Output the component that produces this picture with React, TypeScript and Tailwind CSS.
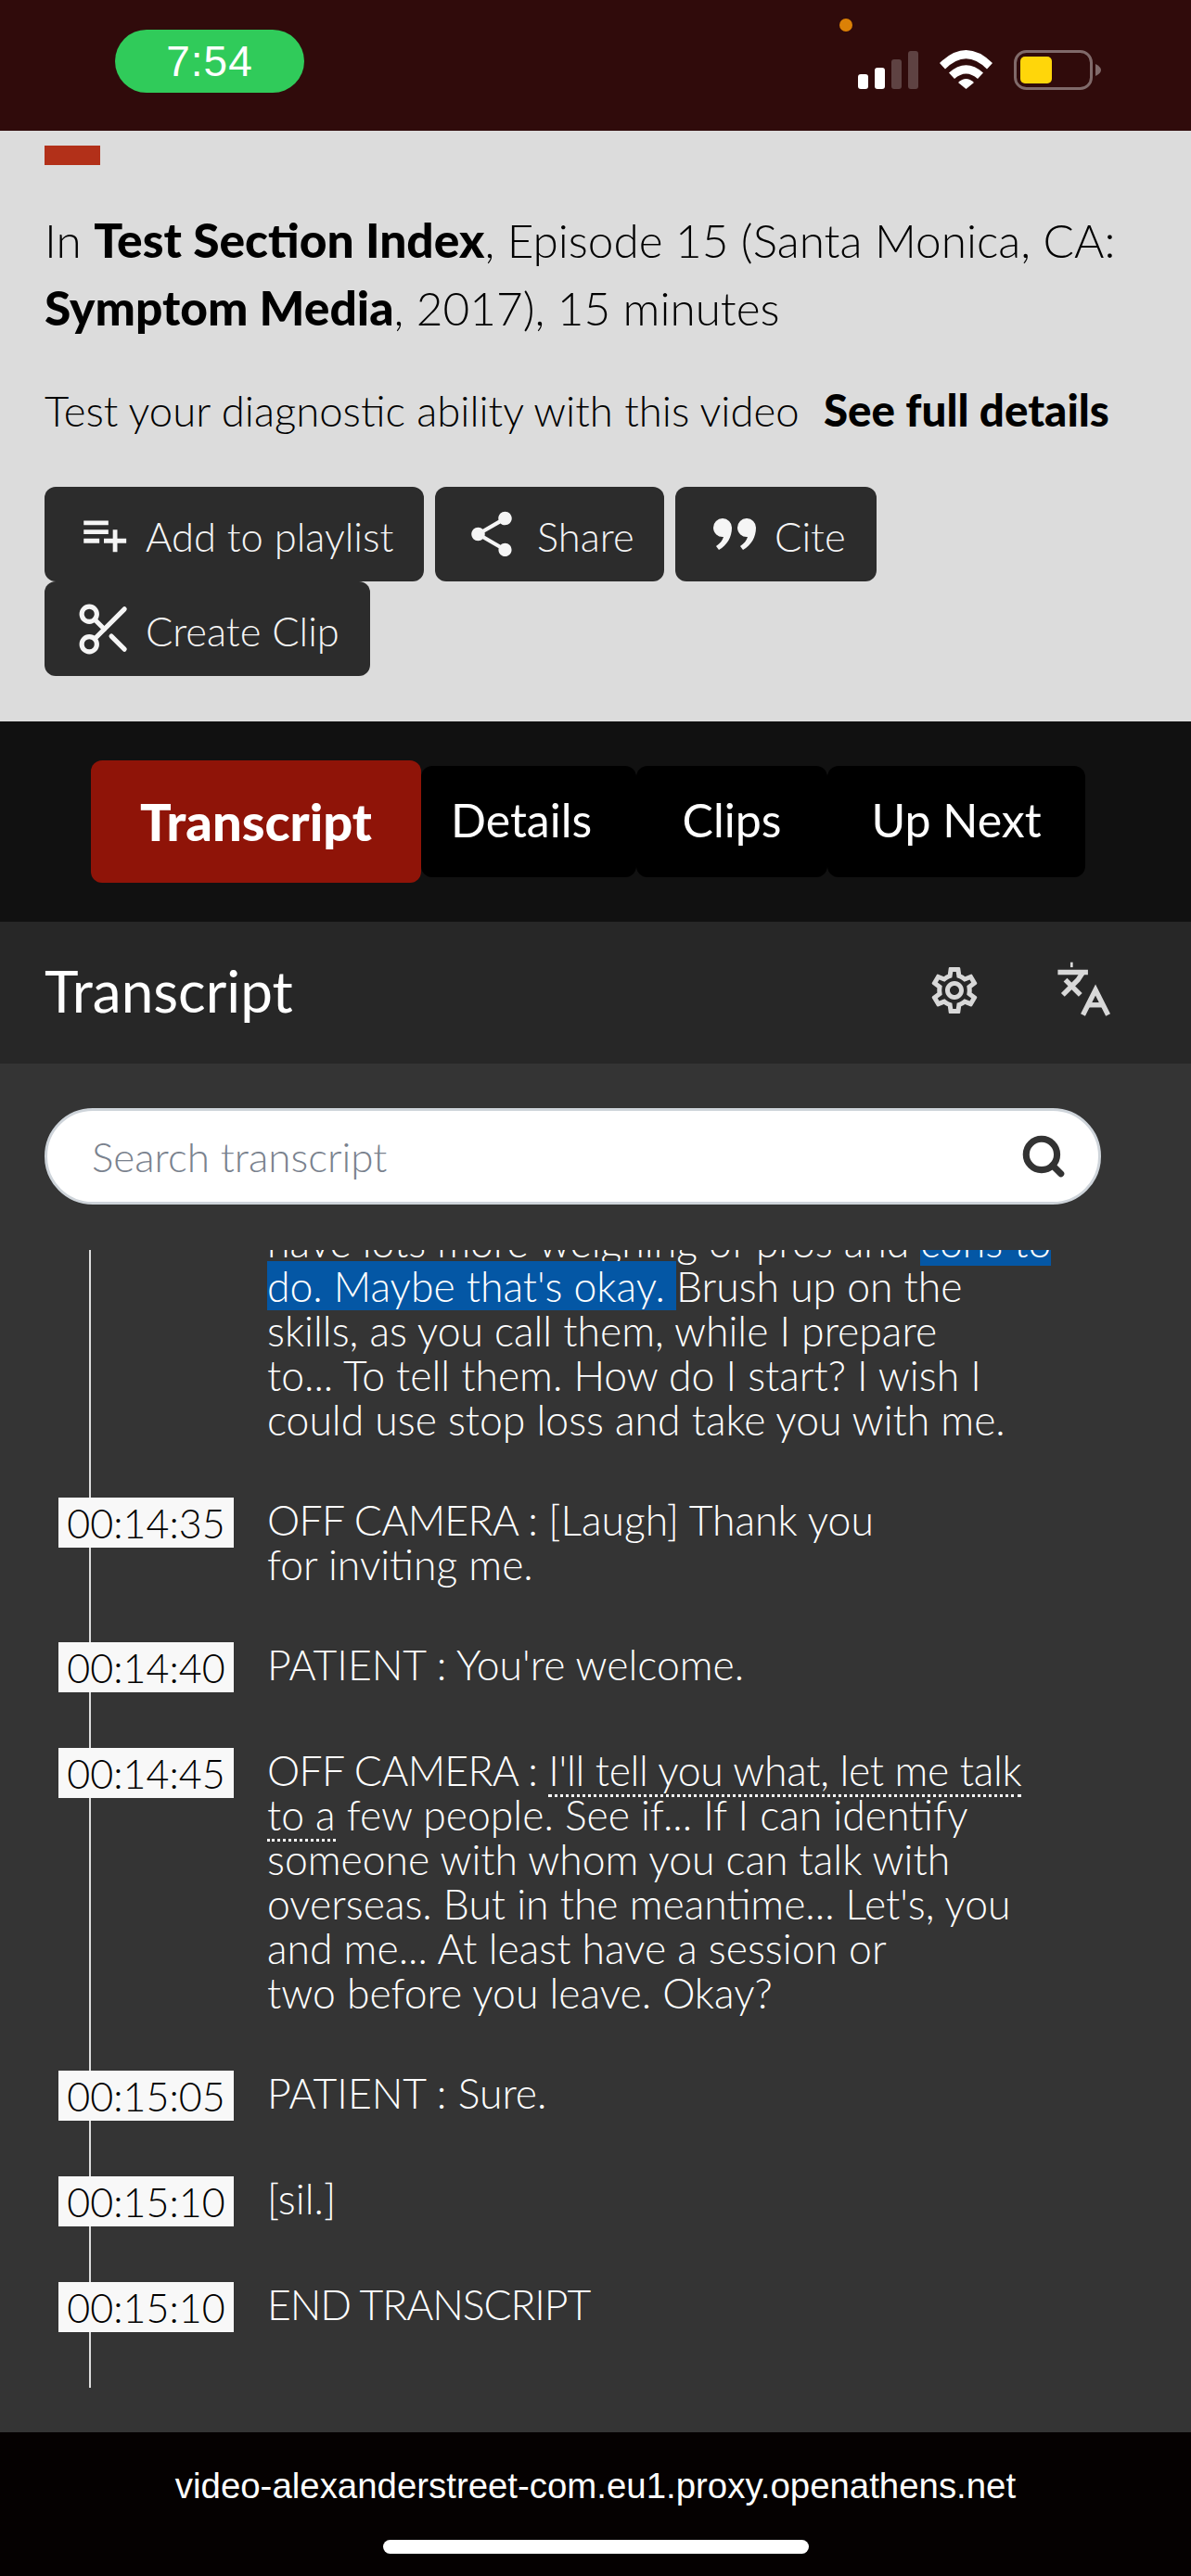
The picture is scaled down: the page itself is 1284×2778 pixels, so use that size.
import React from 'react';
import { MdOutlineSettings, MdPlaylistAdd, MdShare } from 'react-icons/md';
import { Languages, Scissors, Search } from 'lucide-react';

const FONT = "font-['Lato','Noto_Sans',sans-serif]";

const StatusIcons = () => (
  <svg width="282" height="78" viewBox="905 20 282 78" className="block">
    <circle cx="912" cy="27" r="7" fill="#db8106" />
    <rect x="925" y="80" width="11" height="16" rx="3" fill="#fff" />
    <rect x="943" y="73" width="11" height="23" rx="3" fill="#fff" />
    <rect x="961" y="64" width="11" height="32" rx="3" fill="#5e4242" />
    <rect x="979" y="55" width="11" height="41" rx="3" fill="#5e4242" />
    <path d="M1013 68 Q1041.500 40 1070 68 L1064 74.500 Q1041.500 52 1019 74.500 Z" fill="#fff" />
    <path d="M1023 78.500 Q1041.500 62 1060 78.500 L1054 85 Q1041.500 74 1029 85 Z" fill="#fff" />
    <path d="M1033 89 Q1041.500 81 1050 89 L1041.500 96 Z" fill="#fff" />
    <rect x="1094.500" y="55.500" width="82" height="40" rx="12" fill="none" stroke="#806a6a" strokeWidth="3" />
    <rect x="1100" y="61" width="34" height="29" rx="5" fill="#ffd60a" />
    <path d="M1181 69 Q1187 72 1187 75.500 Q1187 79 1181 82 Z" fill="#806a6a" />
  </svg>
);

const QuoteIcon = () => (
  <svg width="46" height="34" viewBox="0 0 46 34" fill="#f5f5f5" className="shrink-0">
    <path d="M0 10 a10 10 0 1 1 20 0 c0 10 -5 19 -14 24 l-3 -4 c4 -3 7 -6 8 -10 a10 10 0 0 1 -11 -10 Z" />
    <path d="M26 10 a10 10 0 1 1 20 0 c0 10 -5 19 -14 24 l-3 -4 c4 -3 7 -6 8 -10 a10 10 0 0 1 -11 -10 Z" />
  </svg>
);

const ACTION = 'flex items-center h-[102px] rounded-xl bg-[#2c2c2c] text-[#f5f5f5] text-[43.500px] font-light leading-none';
const CAPS = 'tracking-[-0.7px]';
const DOTTED = 'border-b-[3px] border-dotted border-white';

type Row = { time: string | null; lines: React.ReactNode[] };

const ROWS: Row[] = [
  {
    time: null,
    lines: [
      <>have lots more weighing of pros and <span className="bg-[#0457a5]">cons to</span></>,
      <><span className="bg-[#0457a5]">do. Maybe that's okay. </span>Brush up on the</>,
      'skills, as you call them, while I prepare',
      'to... To tell them. How do I start? I wish I',
      'could use stop loss and take you with me.',
    ],
  },
  { time: '00:14:35', lines: [<><span className={CAPS}>OFF CAMERA :</span> [Laugh] Thank you</>, 'for inviting me.'] },
  { time: '00:14:40', lines: ["PATIENT : You're welcome."] },
  {
    time: '00:14:45',
    lines: [
      <><span className={CAPS}>OFF CAMERA :</span> <span className={`${DOTTED} tracking-[-0.3px]`}>I'll tell you what, let me talk</span></>,
      <><span className={DOTTED}>to a</span> few people. See if... If I can identify</>,
      'someone with whom you can talk with',
      "overseas. But in the meantime... Let's, you",
      'and me... At least have a session or',
      'two before you leave. Okay?',
    ],
  },
  { time: '00:15:05', lines: ['PATIENT : Sure.'] },
  { time: '00:15:10', lines: ['[sil.]'] },
  { time: '00:15:10', lines: [<span className="tracking-[-1.100px]">END TRANSCRIPT</span>] },
];

const App: React.FC = () => {
  return (
    <div className={`w-[1284px] h-[2778px] overflow-hidden flex flex-col ${FONT}`}>
      {/* status bar */}
      <div className="h-[141px] shrink-0 bg-[#300b0b] flex items-start pl-[124px] pr-[97px]">
        <div className="mt-[32px] w-[204px] h-[68px] rounded-full bg-[#30cb5a] flex items-center justify-center text-white text-[46px] tracking-[1px] font-['Liberation_Sans',sans-serif]">
          7:54
        </div>
        <div className="ml-auto mt-[20px]">
          <StatusIcons />
        </div>
      </div>

      {/* citation */}
      <div className="h-[637px] shrink-0 bg-[#dcdcdc] text-black px-[48px] pt-[16px]">
        <div className="w-[60px] h-[21px] bg-[#b23019]" />
        <div className="mt-[44px] text-[49.500px] leading-[72px] font-light whitespace-nowrap">
          <div>In <b className="text-[51.500px] font-black">Test Section Index</b>, Episode 15 (Santa Monica, CA:</div>
          <div><b className="text-[51.500px] font-black">Symptom Media</b>, 2017), 15 minutes</div>
        </div>
        <div className="mt-[46px] text-[45.500px] leading-[56px] font-light whitespace-nowrap">
          Test your diagnostic ability with this video <b className="ml-[14px] text-[47.500px] font-black">See full details</b>
        </div>
        <div className="mt-[54px] flex flex-wrap gap-x-[12px]">
          <button className={`${ACTION} w-[409px] pl-[35px]`}>
            <MdPlaylistAdd size={58} className="shrink-0" />
            <span className="ml-[16px] mt-[6px]">Add to playlist</span>
          </button>
          <button className={`${ACTION} w-[247px] pl-[32px]`}>
            <MdShare size={58} className="shrink-0" />
            <span className="ml-[20px] mt-[6px]">Share</span>
          </button>
          <button className={`${ACTION} w-[217px] pl-[41px]`}>
            <QuoteIcon />
            <span className="ml-[20px] mt-[6px]">Cite</span>
          </button>
          <button className={`${ACTION} w-[351px] pl-[32px]`}>
            <Scissors size={65} strokeWidth={1.9} className="shrink-0" />
            <span className="ml-[12px] mt-[6px]">Create Clip</span>
          </button>
        </div>
      </div>

      {/* tabs */}
      <div className="h-[216px] shrink-0 bg-[#111111] flex items-start pl-[98px] pt-[42px] text-white text-[50px] leading-none">
        <div className="w-[356px] h-[132px] rounded-xl bg-[#8f1408] text-[56px] font-black flex items-center justify-center">Transcript</div>
        <div className="mt-[6px] w-[232px] h-[120px] rounded-xl bg-black flex items-center pl-[32px] pb-[4px]">Details</div>
        <div className="mt-[6px] w-[206px] h-[120px] rounded-xl bg-black flex items-center justify-center pb-[4px]">Clips</div>
        <div className="mt-[6px] w-[278px] h-[120px] rounded-xl bg-black flex items-center justify-center pb-[4px]">Up Next</div>
      </div>

      {/* transcript header */}
      <div className="h-[153px] shrink-0 bg-[#272727] flex items-center pl-[48px] pr-[84px] pb-[6px] text-white">
        <div className="text-[62px] leading-none">Transcript</div>
        <MdOutlineSettings size={60} color="#d8d8d8" className="ml-auto" />
        <Languages size={65} strokeWidth={2} color="#d8d8d8" strokeLinecap="butt" strokeLinejoin="miter" className="ml-[76px]" />
      </div>

      {/* transcript body */}
      <div className="flex-1 min-h-0 bg-[#343434] pt-[48px] text-white">
        <div className="mx-[48px] w-[1139px] h-[104px] rounded-full bg-white border-[3px] border-[#ced4da] flex items-center pl-[48px] pr-[34px]">
          <input
            placeholder="Search transcript"
            className="flex-1 min-w-0 outline-none bg-transparent text-[44px] font-light text-[#333] placeholder:text-[#7a828e]"
          />
          <Search size={50} strokeWidth={3.4} color="#333333" />
        </div>
        <div className="mt-[49px] h-[1227px] overflow-hidden">
          <div className="-mt-[33px] ml-[96px] border-l-2 border-[#dddddd] flex flex-col gap-[60px] pb-[60px]">
            {ROWS.map((row, i) => (
              <div key={i} className="flex items-start min-h-[54px]">
                {row.time ? (
                  <div className="-ml-[35px] w-[189px] h-[54px] shrink-0 bg-[#f8f8f8] text-black text-[43px] font-light flex items-center justify-center leading-none">
                    {row.time}
                  </div>
                ) : (
                  <div className="-ml-[35px] w-[189px] shrink-0" />
                )}
                <div className="ml-[36px] text-[44.500px] leading-[48px] font-light whitespace-nowrap">
                  {row.lines.map((line, j) => (
                    <div key={j}>{line}</div>
                  ))}
                </div>
              </div>
            ))}
          </div>
        </div>
      </div>

      {/* safari address bar */}
      <div className="h-[155px] shrink-0 bg-[#050101] flex flex-col items-center pt-[36px] text-white">
        <div className="text-[38.400px] leading-[44px] font-['Liberation_Sans',sans-serif]">video-alexanderstreet-com.eu1.proxy.openathens.net</div>
        <div className="mt-[36px] w-[459px] h-[15px] rounded-full bg-white" />
      </div>
    </div>
  );
};

export default App;
